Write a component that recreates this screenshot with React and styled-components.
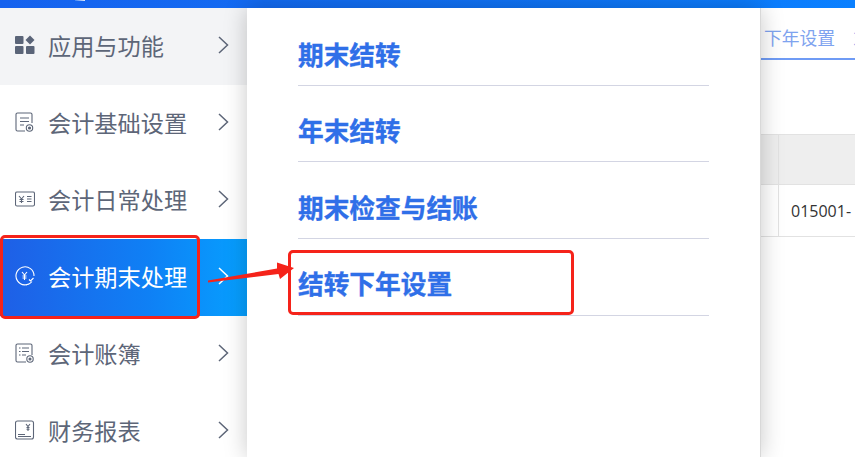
import React from "react";
import styled, { createGlobalStyle } from "styled-components";

const GlobalStyle = createGlobalStyle`
  html, body {
    margin: 0;
    padding: 0;
    background: #fff;
    overflow: hidden;
  }
  body {
    font-family: "Noto Sans CJK SC", "Liberation Sans", sans-serif;
  }
`;

const Page = styled.div`
  position: relative;
  width: 855px;
  height: 457px;
  overflow: hidden;
  display: flex;
  flex-direction: column;
`;

const TopBar = styled.div`
  height: 8px;
  flex: none;
  position: relative;
  background: linear-gradient(90deg, #1662ee 0%, #1170f4 50%, #0a80ff 100%);
`;

// bottom of the logo, the rest is cut off by the screenshot
const LogoTip = styled.div`
  position: absolute;
  left: 75px;
  top: 0;
  width: 10px;
  height: 1px;
  background: linear-gradient(90deg, #3f84f3, #dfeafc);
`;

const Body = styled.div`
  flex: 1;
  display: flex;
  min-height: 0;
`;

const Sidebar = styled.div`
  width: 247px;
  flex: none;
  display: flex;
  flex-direction: column;
`;

const MenuRow = styled.div`
  height: 77px;
  flex: none;
  box-sizing: border-box;
  display: flex;
  align-items: center;
  padding: 0 18px 3px 15px;
  color: ${(p) => (p.$active ? "#fff" : "#5d6678")};
  background: ${(p) =>
    p.$active
      ? "linear-gradient(90deg, #1f5fe6 0%, #0f80f5 60%, #06a0ff 100%)"
      : p.$hover
      ? "#f3f4f6"
      : "#fff"};
`;

const IconSlot = styled.span`
  width: 20px;
  height: 20px;
  flex: none;
  display: flex;
  margin-right: 13px;
`;

const MenuLabel = styled.span`
  flex: 1;
  font-size: 23.2px;
  line-height: 30px;
  white-space: nowrap;
`;

const Panel = styled.div`
  width: 514px;
  flex: none;
  box-sizing: border-box;
  padding: 0 51px;
  background: #fff;
  box-shadow: 0 0 22px rgba(0, 0, 0, 0.22);
  border-right: 1px solid #d8d8d8;
  position: relative;
  z-index: 2;
`;

const PanelRow = styled.div`
  height: ${(p) => (p.$first ? "77.6px" : "76.7px")};
  box-sizing: border-box;
  padding-top: ${(p) => (p.$first ? "24px" : "22.5px")};
  border-bottom: 1px solid #d3d5e3;
  color: #2f6fe8;
  font-size: 25.7px;
  line-height: 44px;
  font-weight: 700;
  -webkit-text-stroke: 0.35px #2f6fe8;
`;

const Content = styled.div`
  flex: 1;
  min-width: 0;
  overflow: hidden;
`;

const TabBar = styled.div`
  height: 52px;
  box-sizing: border-box;
  display: flex;
  align-items: center;
  gap: 18px;
  padding: 7px 0 0 3px;
  border-bottom: 2px solid #6f9bf5;
  color: #7ea3ef;
  font-size: 17.8px;
  white-space: nowrap;
`;

const Table = styled.div`
  margin-top: 74px;
`;

const TableRow = styled.div`
  display: grid;
  grid-template-columns: 18px 1fr;
  height: ${(p) => (p.$head ? "51px" : "52px")};
  background: ${(p) => (p.$head ? "#eeeeee" : "#fff")};
  border-top: ${(p) => (p.$head ? "1px solid #e2e2e2" : "none")};
  border-bottom: 1px solid #e2e2e2;
  box-sizing: border-box;
`;

const TableCell = styled.div`
  display: flex;
  align-items: center;
  padding-left: 12px;
  margin-left: ${(p) => (p.$lead ? "0" : "-1px")};
  border-left: ${(p) => (p.$lead ? "none" : "1px solid #e2e2e2")};
  font-family: "Open Sans", "Liberation Sans", sans-serif;
  font-size: 16px;
  color: #333;
  white-space: nowrap;
`;

// annotations drawn on top of the screenshot
const RedBox = styled.div`
  position: absolute;
  box-sizing: border-box;
  left: ${(p) => p.$x}px;
  top: ${(p) => p.$y}px;
  width: ${(p) => p.$w}px;
  height: ${(p) => p.$h}px;
  border: 3.5px solid #f5231a;
  border-radius: 5px;
  z-index: 5;
`;

const Arrow = styled.svg`
  position: absolute;
  left: 205px;
  top: 260px;
  z-index: 6;
`;

const iconProps = {
  width: 20,
  height: 20,
  viewBox: "0 0 20 20",
  fill: "none",
  stroke: "currentColor",
  strokeWidth: 1.1,
};

const AppsIcon = () => (
  <svg width="20" height="20" viewBox="0 0 20 20" fill="#5a6478">
    <rect x="0" y="1" width="8.5" height="8" rx="1" />
    <rect x="0" y="11" width="8.5" height="8" rx="1" />
    <rect x="11" y="11" width="8.5" height="8" rx="1" />
    <path d="M15 0.5 L19.5 5 L15 9.5 L10.5 5 Z" />
  </svg>
);

const SetupIcon = () => (
  <svg {...iconProps}>
    <path d="M10 19H2.500A1.500 1.500 0 0 1 1 17.500V2.500A1.500 1.500 0 0 1 2.500 1h13A1.500 1.500 0 0 1 17 2.500V11" />
    <path d="M5 6h9M5 9.500h9M5 13h4" />
    <circle cx="14.500" cy="16" r="3.200" />
    <circle cx="14.500" cy="16" r="1" fill="currentColor" />
  </svg>
);

const DailyIcon = () => (
  <svg {...iconProps}>
    <rect x="0.500" y="3" width="19" height="14" rx="1.500" />
    <path d="M4 7l2.500 3L9 7M6.500 10v4M4.500 10.500h4M4.500 12.500h4M12 7.500h4.500M12 10h4.500M12 12.500h4.500" />
  </svg>
);

const CloseIcon = () => (
  <svg {...iconProps}>
    <path d="M17 15.500A9 9 0 1 1 19 10" />
    <path d="M11 19l2.500-1" />
    <path d="M7 6l2.500 3L12 6M9.500 9v5M7.500 10h4M7.500 12h4" />
    <path d="M14 13.500l1.500 1.500 3-3" />
  </svg>
);

const LedgerIcon = () => (
  <svg {...iconProps}>
    <path d="M11 19H2.500A1.500 1.500 0 0 1 1 17.500V2.500A1.500 1.500 0 0 1 2.500 1h13A1.500 1.500 0 0 1 17 2.500V12" />
    <path d="M4 5h1.500M7 5h7M4 8.500h1.500M7 8.500h7M4 12h1.500M7 12h4" />
    <circle cx="15" cy="16" r="3.200" />
    <circle cx="15" cy="16" r="1" fill="currentColor" />
  </svg>
);

const ReportIcon = () => (
  <svg {...iconProps}>
    <rect x="0.500" y="1" width="18" height="18" rx="2" />
    <path d="M3 14.500h7M3 16.500h13" />
    <path d="M11 4l2 2.500L15 4M13 6.500V11M11.500 7.500h3M11.500 9.200h3" />
  </svg>
);

const Chevron = () => (
  <svg width="12" height="20" viewBox="0 0 12 20" fill="none" stroke="currentColor" strokeWidth="1.5">
    <path d="M2 2l8.500 8L2 18" />
  </svg>
);

const menu = [
  { label: "应用与功能", Icon: AppsIcon, hover: true },
  { label: "会计基础设置", Icon: SetupIcon },
  { label: "会计日常处理", Icon: DailyIcon },
  { label: "会计期末处理", Icon: CloseIcon, active: true },
  { label: "会计账簿", Icon: LedgerIcon },
  { label: "财务报表", Icon: ReportIcon },
];

const links = ["期末结转", "年末结转", "期末检查与结账", "结转下年设置"];

export default function App() {
  return (
    <Page>
      <GlobalStyle />
      <TopBar>
        <LogoTip />
      </TopBar>
      <Body>
        <Sidebar>
          {menu.map(({ label, Icon, hover, active }) => (
            <MenuRow key={label} $hover={hover} $active={active}>
              <IconSlot>
                <Icon />
              </IconSlot>
              <MenuLabel>{label}</MenuLabel>
              <Chevron />
            </MenuRow>
          ))}
        </Sidebar>
        <Panel>
          {links.map((text, i) => (
            <PanelRow key={text} $first={i === 0}>
              {text}
            </PanelRow>
          ))}
        </Panel>
        <Content>
          <TabBar>
            <span>下年设置</span>
            <span>末</span>
          </TabBar>
          <Table>
            <TableRow $head>
              <TableCell $lead />
              <TableCell />
            </TableRow>
            <TableRow>
              <TableCell $lead />
              <TableCell>015001-</TableCell>
            </TableRow>
          </Table>
        </Content>
      </Body>
      <RedBox $x={0} $y={235} $w={200} $h={84} />
      <RedBox $x={288} $y={250} $w={286} $h={65} />
      <Arrow width="92" height="30" viewBox="0 0 92 30">
        <path d="M3 20.500 L72 8.500 L72 2.500 L89 8 L75 19 L73.500 14 L3 22.500 Z" fill="#f5231a" />
      </Arrow>
    </Page>
  );
}
